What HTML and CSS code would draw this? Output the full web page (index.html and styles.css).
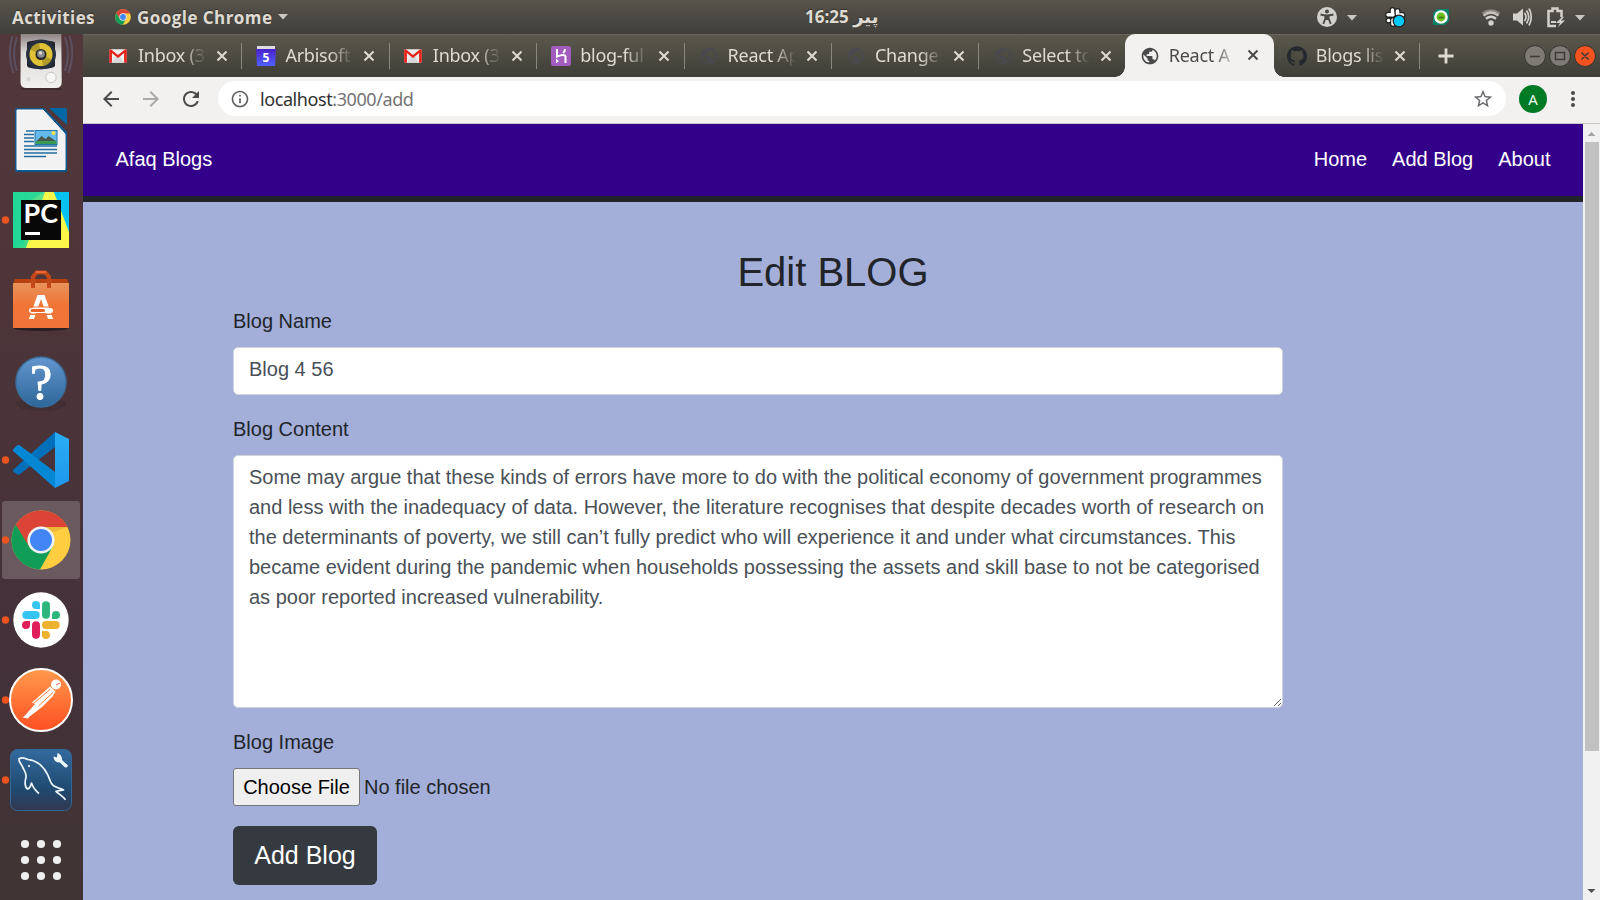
FILE: index.html
```html
<!DOCTYPE html>
<html lang="en">
<head>
<meta charset="utf-8">
<title>React App</title>
<link rel="stylesheet" href="styles.css">
</head>
<body>
<svg class="defs" width="0" height="0" aria-hidden="true">
  <defs>
    <linearGradient id="bag" x1="0" y1="0" x2="0" y2="1"><stop offset="0" stop-color="#e8925c"/><stop offset=".5" stop-color="#f07535"/><stop offset="1" stop-color="#f0743a"/></linearGradient>
    <linearGradient id="help" x1="0" y1="0" x2="0" y2="1"><stop offset="0" stop-color="#6495cf"/><stop offset="1" stop-color="#2c6899"/></linearGradient>
    <linearGradient id="post" x1="0" y1="0" x2="0" y2="1"><stop offset="0" stop-color="#ff9a4c"/><stop offset="1" stop-color="#ff4f22"/></linearGradient>
    <linearGradient id="sql" x1="0" y1="0" x2="0" y2="1"><stop offset="0" stop-color="#336a9e"/><stop offset=".65" stop-color="#1f4a70"/><stop offset="1" stop-color="#32384f"/></linearGradient>
    <linearGradient id="box" x1="0" y1="0" x2="0" y2="1"><stop offset="0" stop-color="#8d8384"/><stop offset=".35" stop-color="#deddda"/><stop offset="1" stop-color="#f1f0ee"/></linearGradient>
    <linearGradient id="pcg" x1="0" y1="0" x2="1" y2="0"><stop offset="0" stop-color="#21d789"/><stop offset=".5" stop-color="#5fe08a"/><stop offset="1" stop-color="#07c3f2"/></linearGradient>
    <linearGradient id="cod" x1="0" y1="0" x2="0" y2="1"><stop offset="0" stop-color="#2aaef5"/><stop offset="1" stop-color="#1d97ec"/></linearGradient>
    <linearGradient id="cal" x1="0" y1="0" x2="0" y2="1"><stop offset="0" stop-color="#4a20c8"/><stop offset="1" stop-color="#5060ff"/></linearGradient>
    <symbol id="chrome" viewBox="-30 -30 60 60">
      <circle r="29.5" fill="#ffcd40"/>
      <path d="M-25.5-14.8A29.5 29.5 0 0 1 26.5-13H0L-12 7z" fill="#db4437"/>
      <path d="M-25.2-15.3A29.5 29.5 0 0 0-1 29.5L11.5 7 0 0-12 6.5z" fill="#0f9d58"/>
      <path d="M0-13H26.5L13-8z" fill="#d9a52c" opacity=".5"/>
      <circle r="13.6" fill="#f1f1f1"/><circle r="11" fill="#4285f4"/>
    </symbol>
    <symbol id="gmail" viewBox="0 0 18 14">
      <rect x=".3" y=".3" width="17.4" height="13.4" rx="1" fill="#eee"/>
      <path d="M3 13.7L7 7l2 1.6L11 7l4 6.7z" fill="#d9d9d9"/>
      <path d="M.2 1.2V13.7H2.9V4L9 9l6.100-5V13.7H17.8V1.200Q17.5.2 16.2.3L9 6.100 1.800.3Q.5.2.2 1.200z" fill="#e3231b"/>
    </symbol>
    <symbol id="globe" viewBox="0 0 24 24"><path d="M12 2C6.480 2 2 6.480 2 12s4.480 10 10 10 10-4.480 10-10S17.520 2 12 2zM11 19.930c-3.950-.490-7-3.850-7-7.930 0-.620.080-1.210.210-1.790L9 15v1c0 1.100.9 2 2 2v1.930zm6.900-2.540c-.260-.810-1-1.390-1.900-1.390h-1v-3c0-.550-.450-1-1-1H8v-2h2c.550 0 1-.450 1-1V7h2c1.100 0 2-.9 2-2v-.410c2.930 1.190 5 4.060 5 7.410 0 2.080-.8 3.970-2.100 5.390z" fill="currentColor"/></symbol>
    <symbol id="x" viewBox="0 0 12 12"><path d="M1.500 1.500l9 9M10.500 1.500l-9 9" stroke="currentColor" stroke-width="2" fill="none"/></symbol>
  </defs>
</svg>

<header class="topbar">
  <span class="activities">Activities</span>
  <svg class="app-icon" width="16" height="16"><use href="#chrome"/></svg>
  <span class="app-name">Google Chrome</span>
  <svg class="caret" width="10" height="6"><path d="M0 0h10L5 5.500z" fill="#c9c7c2"/></svg>
  <div class="clock"><span>16:25</span> <span class="urdu" lang="ur">پیر</span></div>
  <svg class="tray" width="290" height="34" viewBox="1310 0 290 34">
    <circle cx="1327" cy="17" r="10" fill="#d3d1cc"/>
    <circle cx="1327" cy="11.600" r="2" fill="#4a4843"/>
    <path d="M1320.500 14.500l4.800 1v3l-2 5.500M1333.500 14.500l-4.800 1v3l2 5.500" stroke="#4a4843" stroke-width="1.800" fill="none"/><path d="M1325 14.500h4v5.500h-4z" fill="#4a4843"/>
    <path d="M1347 15h10l-5 5.500zM1575 15h10l-5 5.500z" fill="#c9c7c2"/>
    <g stroke-linecap="round" fill="none"><path d="M1392.500 10v5M1397.500 11v3M1388 14.800h5M1388.500 20.500h.1M1393 20v4M1398 15h4.500" stroke="#222" stroke-width="6"/><path d="M1392.500 10v5M1397.500 11v3M1388 14.800h5M1388.500 20.500h.1M1393 20v4M1398 15h4.500" stroke="#fff" stroke-width="3.500"/></g>
    <circle cx="1399" cy="21" r="5.800" fill="#00c8f8" stroke="#222" stroke-width="1.300"/>
    <path d="M1437 9h12v12l-4 4h-12V13z" fill="#0b8069"/><circle cx="1441" cy="17" r="6.800" fill="#fff"/><circle cx="1441" cy="17" r="4.400" fill="#70bd1d"/><path d="M1438.500 17.500h5" stroke="#34751b" stroke-width="1.500"/>
    <circle cx="1491" cy="23" r="2.700" fill="#d3d1cc"/>
    <g fill="none" stroke="#d3d1cc" stroke-width="2.400"><path d="M1486 18.800q5-4 10 0"/><path d="M1483.500 15.600q7.500-6 15 0" opacity=".9"/><path d="M1482.500 13.500q8.500-6 17 0" opacity=".45"/></g>
    <path d="M1513 13.500h4l6-5v17l-6-5h-4z" fill="#d3d1cc"/><path d="M1524.500 13q3 4 0 8M1526.500 10.500q4.500 6.500 0 13M1529 8.500q4.500 8.500 0 17" fill="none" stroke="#d3d1cc" stroke-width="1.700"/>
    <path d="M1556 26h-7.500V11h4V8.500h5V11h4v6" fill="none" stroke="#d3d1cc" stroke-width="2.500"/><path d="M1551 21h5v2h-5z" fill="#d3d1cc"/><path d="M1562 17l-6 6h4l-2 4 7-6.500h-4l3-3.500z" fill="#d3d1cc"/>
  </svg>
</header>

<div class="desktop">
<aside class="dock">
  <svg width="83" height="66" viewBox="0 34 83 66">
    <g fill="none" stroke="#6f7ea6" stroke-width="2" opacity=".35"><path d="M17 37q-6 17 0 34M12.500 36q-6 18 1 37M65 37q6 17 0 34M69.500 36q6 18-1 37"/></g>
    <path d="M21 88h40v2H21z" fill="#2b1d1f" opacity=".5"/>
    <path d="M20.700 34h40.600l.4 48q0 6-6 6H26.500q-6 0-6-6z" fill="url(#box)"/>
    <path d="M28.500 41.500q12-3 24.500 0l2 1V66l-2 1.500q-12 3-24.500 0l-1.500-1.500V42.500z" fill="#25252f"/>
    <circle cx="41" cy="54.500" r="15" fill="#25303f"/><circle cx="41" cy="54.500" r="11.500" fill="#dfc235"/><path d="M41 54.500l-11-5a11.500 11.500 0 0 1 9-6.500zM41 54.500l11 5a11.500 11.500 0 0 1-9 6.500z" fill="#8b7a20" opacity=".55"/><circle cx="41" cy="54.500" r="5.500" fill="#26262a"/><circle cx="41" cy="54" r="3.800" fill="#8a8a8c"/><circle cx="40.500" cy="53" r="1.700" fill="#d7d7d7"/>
    <circle cx="51" cy="77.500" r="5.200" fill="#f7f7f6" stroke="#c7c5c2"/><circle cx="28.500" cy="79" r="2" fill="#d5d3d0"/>
  </svg>
  <svg width="83" height="80" viewBox="0 100 83 80">
    <path d="M17 108h27l23 24v38q0 2-2 2H17q-2 0-2-2v-60q0-2 2-2z" fill="#0d598f"/>
    <path d="M17 110h26l22 24v35.500H17z" fill="#f2f2f2" stroke="#fff"/>
    <path d="M49 108h16q2 0 2 2v15z" fill="#0067a5"/>
    <path d="M26 131h8M24 134.500h10M24 138h10M24 141.500h10M24 146h33M24 149.500h33M24 153h33M24 156.500h22" stroke="#206da0" stroke-width="1.300"/>
    <rect x="35" y="130.500" width="22" height="14" fill="#65b9ed" stroke="#1f77ae"/><path d="M35.500 142l6-6 4 3 3-3 8 5.500z" fill="#485950"/><path d="M35.500 141h21v3h-21z" fill="#3c9a52"/><circle cx="53.500" cy="133" r="2" fill="#ffe14c"/>
  </svg>
  <svg width="83" height="80" viewBox="0 180 83 80">
    <circle cx="5.500" cy="220" r="3.700" fill="#e95420"/>
    <rect x="13" y="192" width="56" height="56" fill="url(#pcg)"/><path d="M45 192h9l15 34v22H26z" fill="#fcf84a"/><path d="M54 192h15v40z" fill="#07c3f2"/><path d="M44 192l-20 12v40l-11 3v-55z" fill="#21d79b" opacity=".8"/>
    <rect x="21" y="200" width="40" height="40" fill="#080808"/>
    <text x="23.500" y="223" class="pc" textLength="34.500" lengthAdjust="spacingAndGlyphs">PC</text><path d="M25 232h15v3H25z" fill="#fff"/>
  </svg>
  <svg width="83" height="80" viewBox="0 260 83 80">
    <ellipse cx="41" cy="328.500" rx="27" ry="2.500" fill="#20171b" opacity=".7"/>
    <path d="M15 279h52l2 5v5H13v-5z" fill="#b94110"/>
    <rect x="13" y="283" width="56" height="45" fill="url(#bag)"/>
    <path d="M33 288v-11l3.500-4.500h9l3.500 4.500v11" fill="none" stroke="#c44918" stroke-width="4"/><path d="M36 272h10" stroke="#ed6838" stroke-width="2"/>
    <path d="M28.800 319l8.700-24h7l8.700 24h-5.200L41 299l-7 20z" fill="#fff"/><path d="M34 307h14l2 6H32z" fill="#fff"/>
    <path d="M27 306.500h28v1H27zM27 313.500h28v1.500H27z" fill="#ef7536"/>
    <rect x="29" y="308" width="24" height="5" rx="2.500" fill="#fff"/><rect x="30.500" y="309" width="14.500" height="3" rx="1.500" fill="#e9662b"/>
  </svg>
  <svg width="83" height="80" viewBox="0 340 83 80">
    <ellipse cx="41" cy="404" rx="25" ry="7" fill="#2c2024" opacity=".25"/>
    <circle cx="41" cy="382" r="25" fill="url(#help)" stroke="#396f9f" stroke-width="1.500"/>
    <text x="41" y="399" class="question" text-anchor="middle">?</text>
  </svg>
  <svg width="83" height="80" viewBox="0 420 83 80">
    <circle cx="5.500" cy="460" r="3.700" fill="#e95420"/>
    <path d="M55 432L13 470v1.500l4.500 3q1.500.5 2.500-.5L55 447z" fill="#0070ba"/>
    <path d="M13 449.500l4-4q1.500-1 3 0L55 472v16L13 451z" fill="#0587d4"/>
    <path d="M55 432l14 7v42l-14 7z" fill="url(#cod)"/>
  </svg>
  <svg width="83" height="80" viewBox="0 500 83 80">
    <rect x="2" y="501" width="78" height="78" rx="3" fill="#6a595f"/><circle cx="5.500" cy="540" r="3.700" fill="#e95420"/>
    <use href="#chrome" x="11" y="510" width="60" height="60"/>
  </svg>
  <svg width="83" height="80" viewBox="0 580 83 80">
    <circle cx="5.500" cy="620" r="3.700" fill="#e95420"/><circle cx="41" cy="620" r="27.700" fill="#fff"/>
    <g stroke-width="8" stroke-linecap="round"><path d="M26.300 615h9.400" stroke="#36c5f0"/><path d="M46 605.300v9.400" stroke="#2eb67d"/><path d="M46 625h9.700" stroke="#ecb22e"/><path d="M36 625.300v9.400" stroke="#e01e5a"/></g>
    <path d="M40 609h-4a4 4 0 1 1 4-4z" fill="#36c5f0"/><path d="M52 619v-4a4 4 0 1 1 4 4z" fill="#2eb67d"/><path d="M42 631h4a4 4 0 1 1-4 4z" fill="#ecb22e"/><path d="M30 621v4a4 4 0 1 1-4-4z" fill="#e01e5a"/>
  </svg>
  <svg width="83" height="80" viewBox="0 660 83 80">
    <circle cx="5.500" cy="700" r="3.700" fill="#e95420"/><circle cx="41" cy="700" r="31" fill="url(#post)" stroke="#fff" stroke-width="2"/>
    <circle cx="56" cy="684.500" r="5" fill="#fff"/><path d="M56 685l4-2" stroke="#f66" stroke-width="1"/>
    <path d="M50 686.500l5.500 5-3 5L42 707l-4.500 3.500L29 717l-1 1.500-5.500-1 3-2.500L35 704l-3-1.500 4-3.500z" fill="#fff"/><path d="M50 689.500L33.500 703.500M53 692.500L38.500 706" stroke="#ff7a3a" stroke-width="1"/>
  </svg>
  <svg width="83" height="80" viewBox="0 740 83 80">
    <circle cx="5.500" cy="780" r="3.700" fill="#e95420"/><rect x="10.500" y="749.500" width="61" height="61" rx="7" fill="url(#sql)" stroke="#316696"/>
    <path d="M39 793.500c-3-2.500-6-6-7.500-10.500-1 3-1.500 6-4 6-3-2-2.500-8-1.500-12 .5-4-1.500-6-3-9-1-3.500-4.500-6-4-9 3-2.500 7-.500 9 .500 11 1 18 9 22.500 22 1.500 4 4 5 8 6.500 2 .7 4 1.300 5 2-3 .5-5 .5-7.500 1.300 3 3 6.500 4.500 9.500 8.500" fill="none" stroke="#eef7fb" stroke-width="1.700" stroke-linejoin="round"/>
    <circle cx="29" cy="766" r="1" fill="#fff"/>
    <path d="M57.500 753l-.5 4.500-3.500-1q0 6 6.500 6l4.500 4.500q3 1.500 3.500-1.500l-6-5.500q0-5.500-4.500-7z" fill="#eef7fb"/>
  </svg>
  <svg width="83" height="80" viewBox="0 820 83 80" fill="#eee"><circle cx="25" cy="844" r="4.100"/><circle cx="41" cy="844" r="4.100"/><circle cx="57" cy="844" r="4.100"/><circle cx="25" cy="860" r="4.100"/><circle cx="41" cy="860" r="4.100"/><circle cx="57" cy="860" r="4.100"/><circle cx="25" cy="876" r="4.100"/><circle cx="41" cy="876" r="4.100"/><circle cx="57" cy="876" r="4.100"/></svg>
</aside>

<main class="browser">
  <div class="tabs">
    <div class="tab"><svg class="fav" viewBox="0 -3 20 20"><use href="#gmail" width="18" height="14"/></svg><span class="label">Inbox (3</span><svg class="close"><use href="#x"/></svg></div>
    <div class="tab"><svg class="fav" viewBox="0 0 20 20"><path d="M1 0h18v4H1z" fill="#ddd"/><path d="M0 3h20l-1 17H1z" fill="url(#cal)"/><text x="10" y="15.500" class="day" text-anchor="middle">5</text></svg><span class="label">Arbisoft</span><svg class="close"><use href="#x"/></svg></div>
    <div class="tab"><svg class="fav" viewBox="0 -3 20 20"><use href="#gmail" width="18" height="14"/></svg><span class="label">Inbox (3</span><svg class="close"><use href="#x"/></svg></div>
    <div class="tab"><svg class="fav" viewBox="0 0 20 20"><rect width="20" height="20" rx="2.500" fill="#a25cbd"/><path d="M6 3v7.500q8-3 8.500 0V17M14 3q0 2.500-2 4" fill="none" stroke="#fff" stroke-width="2"/><path d="M5 12.500l3 2.500-3 2.500z" fill="#fff"/></svg><span class="label">blog-ful</span><svg class="close"><use href="#x"/></svg></div>
    <div class="tab"><svg class="fav dim"><use href="#globe"/></svg><span class="label">React Ap</span><svg class="close"><use href="#x"/></svg></div>
    <div class="tab"><svg class="fav dim"><use href="#globe"/></svg><span class="label">Change</span><svg class="close"><use href="#x"/></svg></div>
    <div class="tab before"><svg class="fav dim"><use href="#globe"/></svg><span class="label">Select to</span><svg class="close"><use href="#x"/></svg></div>
    <div class="tab active"><svg class="fav"><use href="#globe"/></svg><span class="label">React A</span><svg class="close"><use href="#x"/></svg></div>
    <div class="tab"><svg class="fav" viewBox="0 0 24 24"><path fill="#24292e" d="M12 .297c-6.630 0-12 5.373-12 12 0 5.303 3.438 9.800 8.205 11.385.6.113.820-.258.820-.577 0-.285-.010-1.040-.015-2.040-3.338.724-4.042-1.610-4.042-1.610C4.422 18.070 3.633 17.700 3.633 17.700c-1.087-.744.084-.729.084-.729 1.205.084 1.838 1.236 1.838 1.236 1.070 1.835 2.809 1.305 3.495.998.108-.776.417-1.305.760-1.605-2.665-.3-5.466-1.332-5.466-5.930 0-1.310.465-2.380 1.235-3.220-.135-.303-.540-1.523.105-3.176 0 0 1.005-.322 3.300 1.230.960-.267 1.980-.399 3-.405 1.020.006 2.040.138 3 .405 2.280-1.552 3.285-1.230 3.285-1.230.645 1.653.240 2.873.120 3.176.765.840 1.230 1.910 1.230 3.220 0 4.610-2.805 5.625-5.475 5.920.420.360.810 1.096.810 2.220 0 1.606-.015 2.896-.015 3.286 0 .315.210.690.825.570C20.565 22.092 24 17.592 24 12.297c0-6.627-5.373-12-12-12"/></svg><span class="label">Blogs lis</span><svg class="close"><use href="#x"/></svg></div>
    <svg class="plus" width="16" height="16"><path d="M8 .5v15M.5 8h15" stroke="#dfdbd2" stroke-width="2.800"/></svg>
    <svg class="window" width="74" height="24" viewBox="0 0 74 24">
      <g stroke="#33322e"><circle cx="12" cy="12" r="10.500" fill="#7d7b74"/><circle cx="37" cy="12" r="10.500" fill="#7d7b74"/><circle cx="62" cy="12" r="10.500" fill="#f5531f"/></g>
      <path d="M7 12.500h10M32.500 8.500h9v7h-9zM58.500 8.500l7 7M65.500 8.500l-7 7" fill="none" stroke="#3c3b37" stroke-width="1.500"/>
    </svg>
  </div>
  <div class="toolbar">
    <svg class="nav" viewBox="0 0 24 24"><path d="M20 11H7.830l5.590-5.590L12 4l-8 8 8 8 1.410-1.410L7.830 13H20v-2z" fill="#4a4a4a"/></svg>
    <svg class="nav" viewBox="0 0 24 24"><path d="M12 4l-1.410 1.410L16.170 11H4v2h12.170l-5.580 5.590L12 20l8-8z" fill="#aaa9a8"/></svg>
    <svg class="nav" viewBox="0 0 24 24"><path d="M17.650 6.350C16.200 4.900 14.210 4 12 4c-4.420 0-7.990 3.580-7.990 8s3.570 8 7.990 8c3.730 0 6.840-2.550 7.730-6h-2.080c-.820 2.330-3.040 4-5.650 4-3.310 0-6-2.690-6-6s2.690-6 6-6c1.660 0 3.140.690 4.220 1.780L13 11h7V4l-2.350 2.350z" fill="#4a4a4a"/></svg>
    <div class="omnibox">
      <svg class="info" viewBox="0 0 24 24"><path d="M11 7h2v2h-2zm0 4h2v6h-2zm1-9C6.480 2 2 6.480 2 12s4.480 10 10 10 10-4.480 10-10S17.520 2 12 2zm0 18c-4.410 0-8-3.590-8-8s3.590-8 8-8 8 3.590 8 8-3.590 8-8 8z" fill="#5f6163"/></svg>
      <span class="url">localhost<span class="path">:3000/add</span></span>
      <svg class="star" viewBox="0 0 24 24"><path d="M22 9.240l-7.190-.620L12 2 9.190 8.630 2 9.240l5.460 4.730L5.820 21 12 17.270 18.180 21l-1.630-7.030L22 9.240zM12 15.400l-3.760 2.270 1-4.280-3.320-2.880 4.380-.380L12 6.100l1.710 4.040 4.380.380-3.320 2.880 1 4.280L12 15.400z" fill="#66686b"/></svg>
    </div>
    <span class="avatar">A</span>
    <svg class="kebab" width="6" height="18"><g fill="#4a4a4a"><circle cx="3" cy="3" r="2"/><circle cx="3" cy="9" r="2"/><circle cx="3" cy="15" r="2"/></g></svg>
  </div>
  <div class="viewport">
    <div class="page">
      <nav class="navbar"><a class="brand">Afaq Blogs</a><div class="links"><a>Home</a><a>Add Blog</a><a>About</a></div></nav>
      <form class="editor">
        <h1>Edit BLOG</h1>
        <label for="name">Blog Name</label>
        <input id="name" class="control" type="text" value="Blog 4 56">
        <label for="content">Blog Content</label>
        <textarea id="content" class="control">Some may argue that these kinds of errors have more to do with the political economy of government programmes and less with the inadequacy of data. However, the literature recognises that despite decades worth of research on the determinants of poverty, we still can’t fully predict who will experience it and under what circumstances. This became evident during the pandemic when households possessing the assets and skill base to not be categorised as poor reported increased vulnerability.</textarea>
        <label>Blog Image</label>
        <div class="file"><button type="button">Choose File</button><span>No file chosen</span></div>
        <button class="submit" type="button">Add Blog</button>
      </form>
    </div>
    <div class="scrollbar">
      <svg width="17" height="18"><path d="M4.500 12h8l-4-4z" fill="#a3a3a3"/></svg>
      <div class="thumb"></div>
      <svg width="17" height="18"><path d="M4.500 7h8l-4 4z" fill="#505050"/></svg>
    </div>
  </div>
</main>
</div>
</body>
</html>
```
FILE: styles.css
```css
* { box-sizing: border-box; }
body { margin: 0; width: 1600px; height: 900px; overflow: hidden; font-family: "Liberation Sans", Arial, sans-serif; }
svg { display: block; flex: none; }
.defs { position: absolute; }

.topbar { position: relative; height: 34px; display: flex; align-items: center; padding-left: 12px; background: linear-gradient(#58544c, #403f3a); color: #dfdbd2; font: bold 17px/34px "Open Sans", "Noto Sans", sans-serif; text-shadow: 0 -1px 1px #33322d; }
.activities { width: 103px; padding-top: 1px; letter-spacing: .4px; }
.app-icon { margin-right: 6px; }
.app-name { width: 141px; padding-top: 1px; letter-spacing: .45px; white-space: nowrap; }
.clock { position: absolute; left: 805px; top: 0; white-space: nowrap; }
.urdu { font-family: "DejaVu Sans", sans-serif; font-size: 18px; }
.tray { margin-left: auto; }

.desktop { display: flex; height: 866px; }
.dock { width: 83px; flex: none; background: linear-gradient(#52383b, #4b3439 40%, #44313a 72%, #3f3433); }
.pc { font: bold 27px Lato, sans-serif; fill: #fff; }
.question { font: 50px "Liberation Serif", serif; fill: #fff; stroke: #fff; stroke-width: 1px; }
.day { font: bold 12px "Open Sans", sans-serif; fill: #fff; }

.browser { width: 1517px; display: flex; flex-direction: column; }
.tabs { height: 43px; display: flex; align-items: center; padding-left: 12px; background: linear-gradient(#5b594d, #3e3d37); color: #dfdbd2; border-top: 1px solid #66655b; }
.tab { position: relative; width: 147.4px; height: 42px; flex: none; display: flex; align-items: center; padding-left: 14px; }
.tab::after { content: ""; position: absolute; right: 0; top: 8px; width: 1px; height: 26px; background: #8b897f; }
.before::after { display: none; }
.fav { width: 20px; height: 20px; }
.dim { color: #4a4a4e; }
.label { width: 67px; margin: 0 11px 2px 9px; overflow: hidden; white-space: nowrap; font: 18px/30px "Noto Sans", sans-serif; letter-spacing: -.25px; -webkit-mask-image: linear-gradient(90deg, #000 45px, transparent 68px); mask-image: linear-gradient(90deg, #000 45px, transparent 68px); }
.close { width: 12px; height: 12px; margin-bottom: 1px; }
.active { width: 149px; height: 43px; margin: -1px -1px 0 -2px; padding-left: 15px; background: #f2f1f0; color: #4a4a4a; border-radius: 10px 10px 0 0; }
.active::before, .active::after { content: ""; position: absolute; top: auto; bottom: 0; width: 10px; height: 10px; }
.active::before { left: -10px; background: radial-gradient(circle at 0 0, transparent 9.5px, #f2f1f0 10px); }
.active::after { right: -10px; background: radial-gradient(circle at 100% 0, transparent 9.5px, #f2f1f0 10px); }
.plus { margin: 0 0 1px 18px; }
.window { margin-left: auto; margin-right: 3px; }

.toolbar { height: 47px; display: flex; align-items: center; padding: 0 24px 4px 16px; background: #f2f1f0; border-bottom: 1px solid #c9c8c7; }
.nav { width: 24px; height: 24px; margin: 1px 16px 0 0; }
.omnibox { flex: 1; height: 35px; margin-left: -1px; display: flex; align-items: center; padding: 1px 12px 0 12px; background: #fff; border-radius: 18px; }
.info { width: 20px; height: 20px; }
.url { margin: 1px 0 0 10px; font: 18px/32px "Noto Sans", sans-serif; letter-spacing: -.42px; color: #303030; }
.path { color: #747474; }
.star { width: 22px; height: 22px; margin-left: auto; }
.avatar { width: 28px; height: 28px; margin: 1px 23px 0 13px; border-radius: 50%; background: #007a24; color: #fff; font: 15px/28px "Open Sans", sans-serif; text-align: center; }
.kebab { margin-top: 1px; }

.viewport { display: flex; flex: 1; }
.page { flex: 1; background: #a3aed9; color: #212529; font-size: 20px; line-height: 30px; }
.navbar { height: 78px; display: flex; justify-content: space-between; padding: 20px 32.5px 0; background: #330089; border-bottom: 6px solid #212529; color: #fff; }
.links { display: flex; gap: 25px; }
.editor { width: 1200px; margin: 0 auto; padding-top: 46px; }
h1 { margin: 0 0 10px; font-size: 40px; font-weight: 500; line-height: 48px; text-align: center; }
label { display: block; margin-bottom: 11px; }
.control { display: block; width: 1050px; height: 48px; margin: 0 0 19px; padding: 5px 15px 9px; border: 1px solid #ced4da; border-radius: 5px; background: #fff; color: #495057; font: 20px/30px "Liberation Sans", sans-serif; outline: 0; }
textarea.control { height: 253px; padding-top: 6px; overflow: hidden; resize: both; }
.file { display: flex; align-items: center; height: 38px; margin-bottom: 20px; }
.file button { width: 127px; height: 38px; margin-right: 4px; padding: 0; border: 1px solid #767676; border-radius: 3px; background: #efefef; color: #000; font: 20px "Liberation Sans", sans-serif; }
.submit { display: block; width: 144px; height: 59px; padding: 0; border: 0; border-radius: 6px; background: #343a40; color: #fff; font: 25px "Liberation Sans", sans-serif; }
.scrollbar { width: 17px; display: flex; flex-direction: column; background: #f1f1f1; }
.thumb { width: 14px; height: 609px; margin: 0 1px 0 2px; background: #c1c1c1; }
.scrollbar svg:last-child { margin-top: auto; }
```
